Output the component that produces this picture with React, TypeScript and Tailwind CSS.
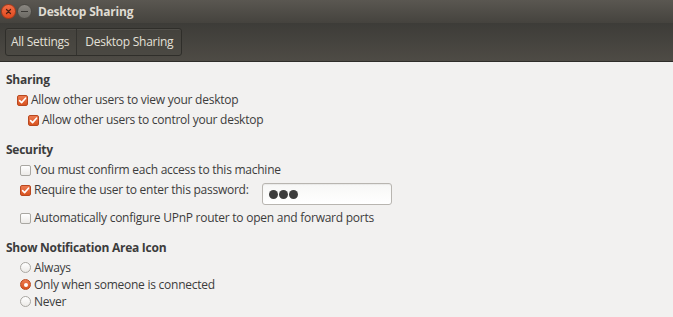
import React from 'react'

const font = { fontFamily: '"Open Sans", "Noto Sans", sans-serif' }

function Check({ checked }: { checked: boolean }) {
  if (checked) {
    return (
      <span className="flex h-[11px] w-[11px] shrink-0 items-center justify-center rounded-[2px] border border-[#b8481f] bg-gradient-to-b from-[#ec7a4f] to-[#d9531e]">
        <svg width="9" height="9" viewBox="0 0 9 9">
          <path d="M1.6 4.6 L3.6 6.6 L7.5 2.2" fill="none" stroke="#ffffff" strokeWidth="1.6" strokeLinecap="round" strokeLinejoin="round" />
        </svg>
      </span>
    )
  }
  return (
    <span className="h-[11px] w-[11px] shrink-0 rounded-[2px] border border-[#a9a7a2] bg-gradient-to-b from-[#ffffff] to-[#eceae7]" />
  )
}

function Radio({ checked }: { checked: boolean }) {
  if (checked) {
    return (
      <span className="flex h-[11px] w-[11px] shrink-0 items-center justify-center rounded-full border border-[#b8481f] bg-gradient-to-b from-[#ec7a4f] to-[#d9531e]">
        <span className="h-[4px] w-[4px] rounded-full bg-white" />
      </span>
    )
  }
  return (
    <span className="h-[11px] w-[11px] shrink-0 rounded-full border border-[#a9a7a2] bg-gradient-to-b from-[#ffffff] to-[#eceae7]" />
  )
}

export default function App() {
  return (
    <div className="flex h-[317px] w-[673px] flex-col overflow-hidden bg-[#f2f1f0] text-[12px] tracking-[-0.25px] text-[#3c3c3c]" style={font}>
      {/* title bar */}
      <div className="flex h-[23px] shrink-0 items-center bg-gradient-to-b from-[#5a5751] to-[#45433e] pl-[1px]">
        <span className="flex h-[15px] w-[15px] items-center justify-center rounded-full border border-[#a8391a] bg-gradient-to-b from-[#f26d45] to-[#df4a1e]">
          <svg width="7" height="7" viewBox="0 0 7 7">
            <path d="M1.5 1.5 L5.5 5.5 M5.5 1.5 L1.5 5.5" stroke="#4a2012" strokeWidth="1.2" strokeLinecap="round" />
          </svg>
        </span>
        <span className="ml-[1px] flex h-[15px] w-[15px] items-center justify-center rounded-full border border-[#4a4843] bg-gradient-to-b from-[#8a8781] to-[#6c6a64]">
          <span className="h-[1.5px] w-[7px] bg-[#3a3834]" />
        </span>
        <span className="ml-[6px] text-[12px] font-bold tracking-[-0.2px] text-[#dfdbd2]">Desktop Sharing</span>
      </div>
      {/* toolbar */}
      <div className="flex h-[39px] shrink-0 items-center border-b border-[#2e2d29] bg-gradient-to-b from-[#3d3c38] to-[#4e4b45] px-[5px]">
        <div className="flex h-[28px] items-stretch rounded-[3px] border border-[#2f2e2a] bg-gradient-to-b from-[#44423d] to-[#4b4943] text-[#e4e0d8] shadow-[inset_0_1px_0_rgba(255,255,255,0.06)]">
          <span className="flex items-center pl-[5px] pr-[7px]">All Settings</span>
          <span className="w-px bg-[#34332f]" />
          <span className="flex items-center px-[8px]">Desktop Sharing</span>
        </div>
      </div>
      {/* content */}
      <div className="flex flex-col px-[6px] pt-[10px]">
        <div className="font-bold leading-[16px]">Sharing</div>
        <div className="mt-[2px] flex h-[20px] items-center gap-[3px] pl-[11px]">
          <Check checked />
          <span>Allow other users to view your desktop</span>
        </div>
        <div className="flex h-[20px] items-center gap-[3px] pl-[22px]">
          <Check checked />
          <span>Allow other users to control your desktop</span>
        </div>

        <div className="mt-[12px] font-bold leading-[16px]">Security</div>
        <div className="mt-[2px] flex h-[20px] items-center gap-[3px] pl-[14px]">
          <Check checked={false} />
          <span>You must confirm each access to this machine</span>
        </div>
        <div className="flex h-[28px] items-start pl-[14px]">
          <div className="flex h-[20px] items-center gap-[3px]">
            <Check checked />
            <span>Require the user to enter this password:</span>
          </div>
          <div className="ml-[13px] mt-[3px] flex h-[22px] w-[130px] items-center rounded-[3px] border border-[#b8b5b0] bg-gradient-to-b from-[#f7f7f6] to-[#ffffff] pl-[6px] shadow-[inset_0_1px_1px_rgba(0,0,0,0.06)]">
            <span className="flex gap-[1px]">
              <span className="h-[9px] w-[9px] rounded-full bg-[#3c3c3c]" />
              <span className="h-[9px] w-[9px] rounded-full bg-[#3c3c3c]" />
              <span className="h-[9px] w-[9px] rounded-full bg-[#3c3c3c]" />
            </span>
          </div>
        </div>
        <div className="flex h-[20px] items-center gap-[3px] pl-[14px]">
          <Check checked={false} />
          <span>Automatically configure UPnP router to open and forward ports</span>
        </div>

        <div className="mt-[12px] font-bold leading-[16px]">Show Notification Area Icon</div>
        <div className="mt-[3px] flex h-[17px] items-center gap-[3px] pl-[14px]">
          <Radio checked={false} />
          <span>Always</span>
        </div>
        <div className="flex h-[17px] items-center gap-[3px] pl-[14px]">
          <Radio checked />
          <span>Only when someone is connected</span>
        </div>
        <div className="flex h-[17px] items-center gap-[3px] pl-[14px]">
          <Radio checked={false} />
          <span>Never</span>
        </div>
      </div>
    </div>
  )
}
